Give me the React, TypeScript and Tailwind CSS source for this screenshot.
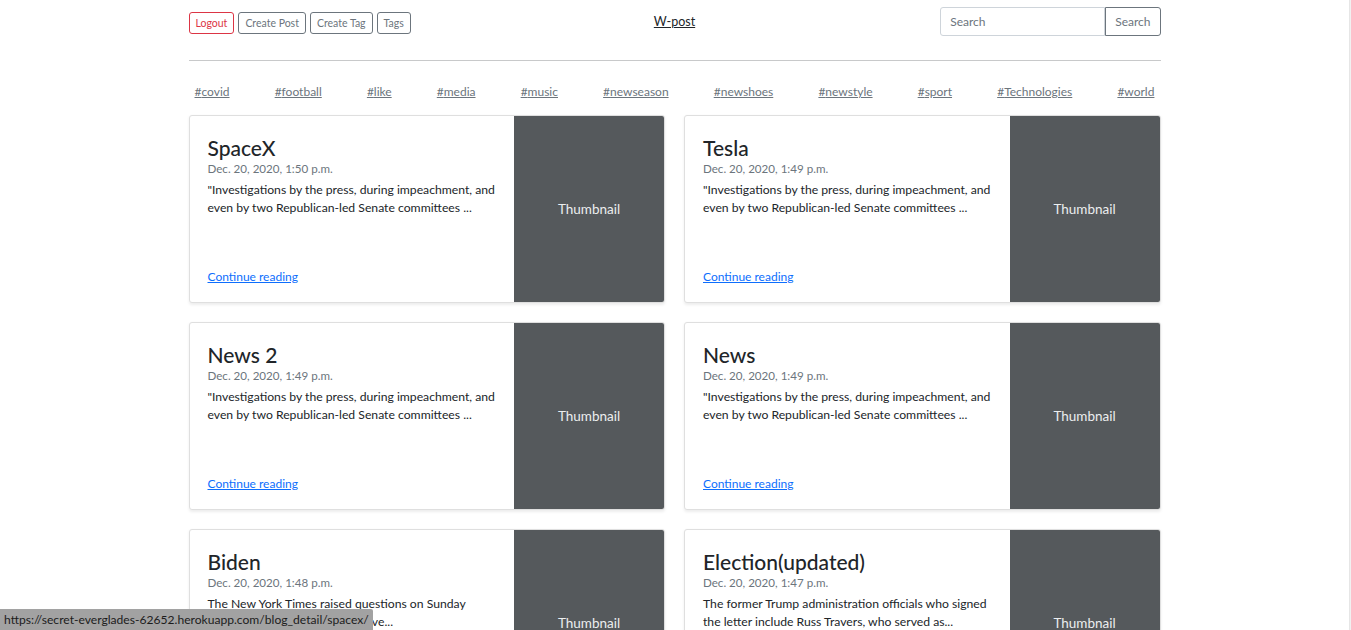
import React from 'react';

const FONT = "font-['Lato','Noto_Sans',sans-serif]";

const TAGS = [
  'covid', 'football', 'like', 'media', 'music', 'newseason',
  'newshoes', 'newstyle', 'sport', 'Technologies', 'world',
];

type Post = { title: string; date: string; lines: string[] };

const POSTS: Post[] = [
  {
    title: 'SpaceX',
    date: 'Dec. 20, 2020, 1:50 p.m.',
    lines: ['"Investigations by the press, during impeachment, and', 'even by two Republican-led Senate committees ...'],
  },
  {
    title: 'Tesla',
    date: 'Dec. 20, 2020, 1:49 p.m.',
    lines: ['"Investigations by the press, during impeachment, and', 'even by two Republican-led Senate committees ...'],
  },
  {
    title: 'News 2',
    date: 'Dec. 20, 2020, 1:49 p.m.',
    lines: ['"Investigations by the press, during impeachment, and', 'even by two Republican-led Senate committees ...'],
  },
  {
    title: 'News',
    date: 'Dec. 20, 2020, 1:49 p.m.',
    lines: ['"Investigations by the press, during impeachment, and', 'even by two Republican-led Senate committees ...'],
  },
  {
    title: 'Biden',
    date: 'Dec. 20, 2020, 1:48 p.m.',
    lines: ['The New York Times raised questions on Sunday', 'about the reporting process, reve...'],
  },
  {
    title: 'Election(updated)',
    date: 'Dec. 20, 2020, 1:47 p.m.',
    lines: ['The former Trump administration officials who signed', 'the letter include Russ Travers, who served as...'],
  },
];

function PostCard({ post }: { post: Post }) {
  return (
    <div className="flex h-[188px] overflow-hidden rounded-[3px] border border-[#dfdfdf] bg-white shadow-[0_1.5px_3px_rgba(0,0,0,0.075)]">
      <div className="flex min-w-0 flex-1 flex-col px-[18px] pt-[18px] pb-[16px]">
        <h3 className="mt-[1px] text-[21px] font-medium leading-[25px] text-[#212529]">{post.title}</h3>
        <div className="mb-[3px] text-[11.6px] leading-[18px] text-[#6c757d]">{post.date}</div>
        <p className="whitespace-nowrap text-[12.2px] leading-[18px] text-[#212529]">
          {post.lines[0]}
          <br />
          {post.lines[1]}
        </p>
        <a href="#" className="mt-auto self-start text-[12px] leading-[18px] text-[#0d6efd] underline">
          Continue reading
        </a>
      </div>
      <div className="flex w-[150px] items-center justify-center bg-[#55595c] text-[13.5px] text-[#eceeef]">
        Thumbnail
      </div>
    </div>
  );
}

export default function App() {
  return (
    <div className={`flex min-h-screen bg-white ${FONT}`}>
      <div className="flex-1">
        <div className="mx-auto w-[972px] pb-10">
          {/* HEADER */}
          <header className="grid grid-cols-[1fr_auto_1fr] items-center pt-[7px]">
            <div className="mt-[3px] flex gap-[4px]">
              <button className="rounded-[3px] border border-[#dc3545] px-[6px] py-[2px] text-[10.5px] leading-[16px] text-[#dc3545]">Logout</button>
              <button className="rounded-[3px] border border-[#6c757d] px-[6px] py-[2px] text-[10.5px] leading-[16px] text-[#6c757d]">Create Post</button>
              <button className="rounded-[3px] border border-[#6c757d] px-[6px] py-[2px] text-[10.5px] leading-[16px] text-[#6c757d]">Create Tag</button>
              <button className="rounded-[3px] border border-[#6c757d] px-[6px] py-[2px] text-[10.5px] leading-[16px] text-[#6c757d]">Tags</button>
            </div>
            <a href="#" className="mt-[2px] text-[12.5px] text-[#212529] underline">W-post</a>
            <div className="flex justify-end">
              <input
                placeholder="Search"
                className="box-border h-[29px] w-[165px] rounded-l-[3px] border border-[#ced4da] px-[9px] text-[12px] text-[#212529] outline-none placeholder:text-[#6c757d]"
              />
              <button className="h-[29px] rounded-r-[3px] border border-[#6c757d] px-[9px] text-[12px] text-[#6c757d]">Search</button>
            </div>
          </header>

          <hr className="mt-[24px] border-t border-[#c8c9ca]" />

          {/* TAGS */}
          <nav className="mt-[16px] flex justify-between">
            {TAGS.map((t) => (
              <a key={t} href="#" className="p-[6px] text-[12px] leading-[18px] text-[#6c757d] underline">
                #{t}
              </a>
            ))}
          </nav>

          {/* POSTS */}
          <div className="mt-[8px] grid grid-cols-2 gap-x-[19px] gap-y-[19px]">
            {POSTS.map((p) => (
              <PostCard key={p.title} post={p} />
            ))}
          </div>
        </div>
      </div>
      <div className="w-[2px] border-l border-[#e6e6e6] bg-[#f1f1f1]" />

      {/* status bar overlay */}
      <div className="fixed bottom-0 left-0 h-[21px] w-[373px] overflow-hidden whitespace-nowrap rounded-tr-[2px] bg-[#a2a2a2] pl-[4px] text-[12.1px] leading-[21px] text-[#1c1c1c]">
        https://secret-everglades-62652.herokuapp.com/blog_detail/spacex/
      </div>
    </div>
  );
}
